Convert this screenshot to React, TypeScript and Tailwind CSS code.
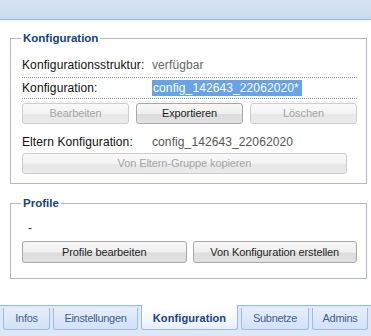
const btnBase =
  "flex items-center justify-center rounded-[3px] border text-[11px] leading-none tracking-[-0.1px]";
const btnOn = `${btnBase} border-[#a8a8a8] text-[#1e1e1e] bg-[linear-gradient(to_bottom,#f7f7f7_0%,#efefef_52%,#dcdcdc_53%,#e2e2e2_100%)]`;
const btnOff = `${btnBase} border-[#cdcdcd] text-[#a4a4a4] bg-[linear-gradient(to_bottom,#f9f9f9_0%,#f3f3f3_52%,#e7e7e7_53%,#ebebeb_100%)]`;

const tabOff =
  "mt-[2px] flex h-[22px] items-center justify-center rounded-b-[3px] border-x border-b border-[#9dbbe5] bg-[linear-gradient(to_bottom,#e6eefa_0%,#d2e1f5_100%)] text-[11px] tracking-[-0.3px] text-[#3d5e93]";

function Row({
  label,
  children,
  className,
}: {
  label: string;
  children: React.ReactNode;
  className: string;
}) {
  return (
    <div className={`flex items-center ${className}`}>
      <span className="w-[130px] shrink-0 text-[#111]">{label}</span>
      {children}
    </div>
  );
}

export default function App() {
  return (
    <div className="flex h-[336px] w-[371px] flex-col bg-white font-['Liberation_Sans',Arial,sans-serif] text-[12px] tracking-[0.1px]">
      <div className="h-[20px] shrink-0 border-b border-[#99bbe8] bg-[linear-gradient(to_bottom,#d7e3f2_0%,#cbdbef_100%)]" />

      <div className="pl-[10px]">
        <fieldset className="mt-[11px] w-[357px] border border-[#b5b8c8] pb-[9px] pl-[11px] pr-[9px] pt-[7px]">
          <legend className="ml-[-1px] px-[2px] text-[11.5px] font-bold leading-[14px] tracking-normal text-[#15428b]">
            Konfiguration
          </legend>
          <Row
            label="Konfigurationsstruktur:"
            className="h-[26px] border-b border-dotted border-[#8c8c8c]"
          >
            <span className="text-[#666]">verfügbar</span>
          </Row>
          <Row
            label="Konfiguration:"
            className="h-[21px] border-b border-dotted border-[#8c8c8c]"
          >
            <span className="flex h-[16px] w-[150px] items-center bg-[#66a3e9] pl-[1px] text-white">
              config_142643_22062020*
            </span>
          </Row>
          <div className="mt-[4px] flex gap-[7px]">
            <div className={`${btnOff} h-[21px] flex-1`}>Bearbeiten</div>
            <div className={`${btnOn} h-[21px] flex-1`}>Exportieren</div>
            <div className={`${btnOff} h-[21px] flex-1`}>Löschen</div>
          </div>
          <Row label="Eltern Konfiguration:" className="h-[29px] pt-[6px]">
            <span className="text-[#555]">config_142643_22062020</span>
          </Row>
          <div className={`${btnOff} h-[21px] w-[325px]`}>
            Von Eltern-Gruppe kopieren
          </div>
        </fieldset>

        <fieldset className="mt-[12px] w-[357px] border border-[#b5b8c8] pb-[15px] pl-[11px] pr-[9px] pt-[8px]">
          <legend className="ml-[-1px] px-[2px] text-[11.5px] font-bold leading-[14px] tracking-normal text-[#15428b]">
            Profile
          </legend>
          <div className="flex h-[20px] items-center pl-[6px] text-[#333]">-</div>
          <div className="mt-[3px] grid grid-cols-2 gap-[6px]">
            <div className={`${btnOn} h-[22px]`}>Profile bearbeiten</div>
            <div className={`${btnOn} h-[22px]`}>Von Konfiguration erstellen</div>
          </div>
        </fieldset>
      </div>

      <div className="mt-auto flex h-[31px] shrink-0 items-start gap-[3px] border-t border-[#99bbe8] bg-[#dde7f5] pl-[3px]">
        <div className={`${tabOff} w-[47px]`}>Infos</div>
        <div className={`${tabOff} w-[85px]`}>Einstellungen</div>
        <div className="mt-[-1px] flex h-[25px] w-[97px] items-center justify-center rounded-b-[3px] border-x border-b border-[#99bbe8] bg-[linear-gradient(to_bottom,#ffffff_0%,#f4f8fd_60%,#e6eef9_100%)] pt-[2px] text-[11px] font-bold tracking-[0.1px] text-[#15428b]">
          Konfiguration
        </div>
        <div className={`${tabOff} w-[68px]`}>Subnetze</div>
        <div className={`${tabOff} w-[56px]`}>Admins</div>
      </div>
    </div>
  );
}
